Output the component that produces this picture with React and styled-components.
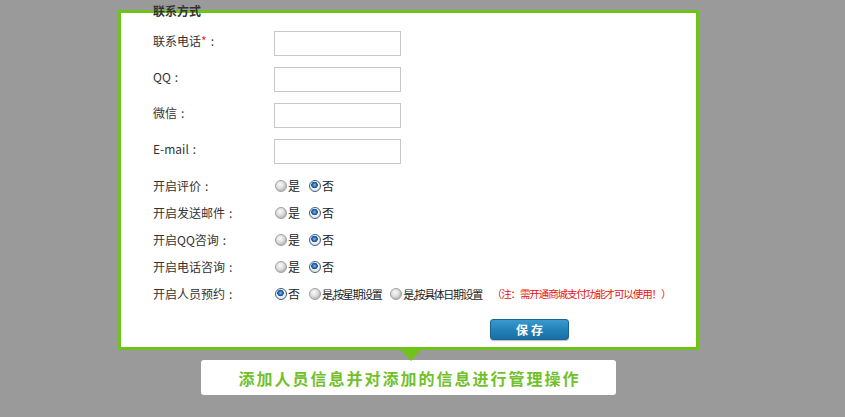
import React from "react";
import styled, { createGlobalStyle } from "styled-components";

const GlobalStyle = createGlobalStyle`
  html, body {
    margin: 0;
    padding: 0;
    background: #9a9a9a;
  }
  body {
    font-family: "Noto Sans CJK SC", "Noto Sans", sans-serif;
    font-size: 12px;
    color: #333;
  }
`;

const Stage = styled.div`
  width: 845px;
  height: 417px;
  padding: 10px 0 0 118px;
  box-sizing: border-box;
  display: flex;
  flex-direction: column;
  align-items: flex-start;
`;

const Panel = styled.div`
  position: relative;
  width: 581px;
  height: 340px;
  box-sizing: border-box;
  border: 3px solid #6fc31b;
  background: #fff;
  padding: 0 0 0 32px;

  &::after {
    content: "";
    position: absolute;
    left: 280px;
    bottom: -14px;
    border-left: 10px solid transparent;
    border-right: 10px solid transparent;
    border-top: 11px solid #6fc31b;
  }
`;

const Title = styled.div`
  margin-top: -9px;
  height: 14px;
  line-height: 14px;
  font-weight: bold;
  font-size: 12px;
  color: #333;
  margin-bottom: 10px;
`;

const FieldRow = styled.div`
  display: grid;
  grid-template-columns: 121px auto;
  align-items: start;
  height: 36px;
`;

const Label = styled.div`
  padding-top: 4px;
  line-height: 18px;
  font-size: 12px;
  color: #333;
  white-space: nowrap;
`;

const Colon = styled.span`
  margin-left: 4px;
`;

const Star = styled.span`
  color: #e03030;
`;

const TextInput = styled.input`
  margin: 3px 0 0;
  width: 127px;
  height: 25px;
  box-sizing: border-box;
  border: 1px solid #c8c8c8;
  padding: 0 4px;
  outline: none;
  background: #fff;
`;

const ChoiceRow = styled.div`
  display: grid;
  grid-template-columns: 121px auto;
  align-items: center;
  height: 27px;

  & > ${Label} {
    padding-top: 0;
  }
`;

const Options = styled.div`
  display: flex;
  align-items: center;
  white-space: nowrap;
`;

const Option = styled.span`
  display: inline-flex;
  align-items: center;
  margin-right: 8px;
  font-size: ${(p) => (p.$small ? "11px" : "12px")};
  letter-spacing: ${(p) => (p.$small ? "-1.4px" : "0")};
  line-height: 14px;
  color: #222;
`;

const Radio = styled.span`
  display: inline-block;
  width: 12px;
  height: 12px;
  box-sizing: border-box;
  border-radius: 50%;
  margin: 0 1px 0 1px;
  border: 1px solid ${(p) => (p.$on ? "#3f5f86" : "#a0a0a0")};
  background: ${(p) =>
    p.$on
      ? "radial-gradient(circle at 45% 40%, #8cc8f0 0, #2a78c4 1.6px, #1b4f8e 3px, #fff 3.6px, #e6e6e6 5px)"
      : "radial-gradient(circle at 40% 35%, #fafafa 0, #dcdcdc 4px, #bdbdbd 6px)"};
`;

const Note = styled.span`
  margin-left: 2px;
  color: #e81010;
  font-size: 10.5px;
  letter-spacing: -1.1px;
`;

const ButtonRow = styled.div`
  padding: 12px 0 0 337px;
`;

const SaveButton = styled.button`
  width: 79px;
  height: 21px;
  border: 1px solid #1c6390;
  border-radius: 3px;
  background: linear-gradient(#3a9ace, #2280b8 55%, #1a6ea4);
  box-shadow: 0 1px 1px rgba(0, 0, 0, 0.25);
  color: #fff;
  font-family: "Noto Sans CJK SC", sans-serif;
  font-size: 12px;
  font-weight: bold;
  letter-spacing: 3px;
  line-height: 19px;
  padding: 0 0 0 3px;
`;

const Caption = styled.div`
  margin: 10px 0 0 83px;
  width: 415px;
  height: 35px;
  background: #fff;
  border-radius: 3px;
  display: flex;
  align-items: center;
  justify-content: center;
  color: #72c02a;
  font-size: 16px;
  font-weight: bold;
  letter-spacing: 2px;
  padding-left: 2px;
  box-sizing: border-box;
`;

const fields = [
  { label: "联系电话", required: true },
  { label: "QQ" },
  { label: "微信" },
  { label: "E-mail" },
];

const switches = ["开启评价", "开启发送邮件", "开启QQ咨询", "开启电话咨询"];

function YesNo() {
  return (
    <Options>
      <Option>
        <Radio />是
      </Option>
      <Option>
        <Radio $on />否
      </Option>
    </Options>
  );
}

export default function App() {
  return (
    <>
      <GlobalStyle />
      <Stage>
        <Panel>
          <Title>联系方式</Title>
          {fields.map((f) => (
            <FieldRow key={f.label}>
              <Label>
                {f.label}
                {f.required && <Star>*</Star>}
                <Colon>:</Colon>
              </Label>
              <TextInput />
            </FieldRow>
          ))}
          {switches.map((s) => (
            <ChoiceRow key={s}>
              <Label>
                {s}
                <Colon>:</Colon>
              </Label>
              <YesNo />
            </ChoiceRow>
          ))}
          <ChoiceRow>
            <Label>
              开启人员预约<Colon>:</Colon>
            </Label>
            <Options>
              <Option>
                <Radio $on />否
              </Option>
              <Option $small>
                <Radio />是,按星期设置
              </Option>
              <Option $small>
                <Radio />是,按具体日期设置
              </Option>
              <Note>（注：需开通商城支付功能才可以使用！）</Note>
            </Options>
          </ChoiceRow>
          <ButtonRow>
            <SaveButton>保存</SaveButton>
          </ButtonRow>
        </Panel>
        <Caption>添加人员信息并对添加的信息进行管理操作</Caption>
      </Stage>
    </>
  );
}
